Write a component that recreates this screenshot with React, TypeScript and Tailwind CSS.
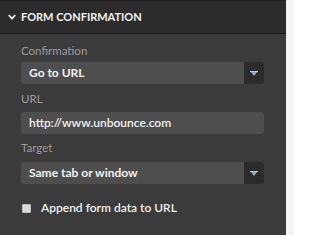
import React from "react";

function Caret() {
  return (
    <svg width="8" height="5" viewBox="0 0 8 5" className="block">
      <path d="M0 0H8L4 5Z" fill="#8ea7bb" />
      <rect x="0" y="0" width="8" height="1" fill="#b9cad8" />
    </svg>
  );
}

function Select({ value }: { value: string }) {
  return (
    <div className="flex h-[22px] w-[243px] rounded-[3px] bg-[#4e4e4e] overflow-hidden">
      <div className="flex-1 flex items-center pl-[8px] text-[12px] font-bold text-[#f2f2f2] leading-none">
        {value}
      </div>
      <div className="w-[20px] bg-[#2b2b2b] flex items-center justify-center">
        <Caret />
      </div>
    </div>
  );
}

export default function App() {
  return (
    <div
      className="flex w-[294px] h-[235px] bg-[#f4f4f4]"
      style={{ fontFamily: "Lato, 'Open Sans', sans-serif" }}
    >
      <div className="w-[286px] h-full bg-[#3b3b3b] flex flex-col">
        <div className="h-[34px] bg-[#2c2c2c] border-t border-[#1f1f1f] border-b border-b-[#1c1c1c] flex items-center pl-[8px]">
          <svg width="8" height="6" viewBox="0 0 8 6" className="mr-[5px]">
            <path d="M0.8 1L4 4.6L7.2 1" stroke="#ececec" strokeWidth="1.8" fill="none" />
          </svg>
          <span className="text-[11px] font-bold text-[#f0f0f0]">
            FORM CONFIRMATION
          </span>
        </div>
        <div className="flex flex-col pl-[21px] pt-[9px]">
          <div className="text-[11.5px] text-[#9b9b9b] h-[19px] leading-[15px]">Confirmation</div>
          <div><Select value="Go to URL" /></div>
          <div className="text-[11.5px] text-[#9b9b9b] h-[19px] leading-[15px] mt-[7px]">URL</div>
          <div className="mt-[2px] h-[22px] w-[243px] rounded-[3px] bg-[#4e4e4e] flex items-center pl-[8px] text-[12px] text-[#f2f2f2] font-semibold">
            http://www.unbounce.com
          </div>
          <div className="text-[11.5px] text-[#9b9b9b] h-[19px] leading-[15px] mt-[6px]">Target</div>
          <div className="mt-[3px]"><Select value="Same tab or window" /></div>
          <div className="flex items-center mt-[15px]">
            <div className="w-[9px] h-[9px] bg-[#d9d9d9] border border-[#bdbdbd] rounded-[1px] ml-[1px]" />
            <span className="ml-[10px] text-[12px] text-[#f0f0f0] font-semibold">Append form data to URL</span>
          </div>
        </div>
      </div>
    </div>
  );
}
